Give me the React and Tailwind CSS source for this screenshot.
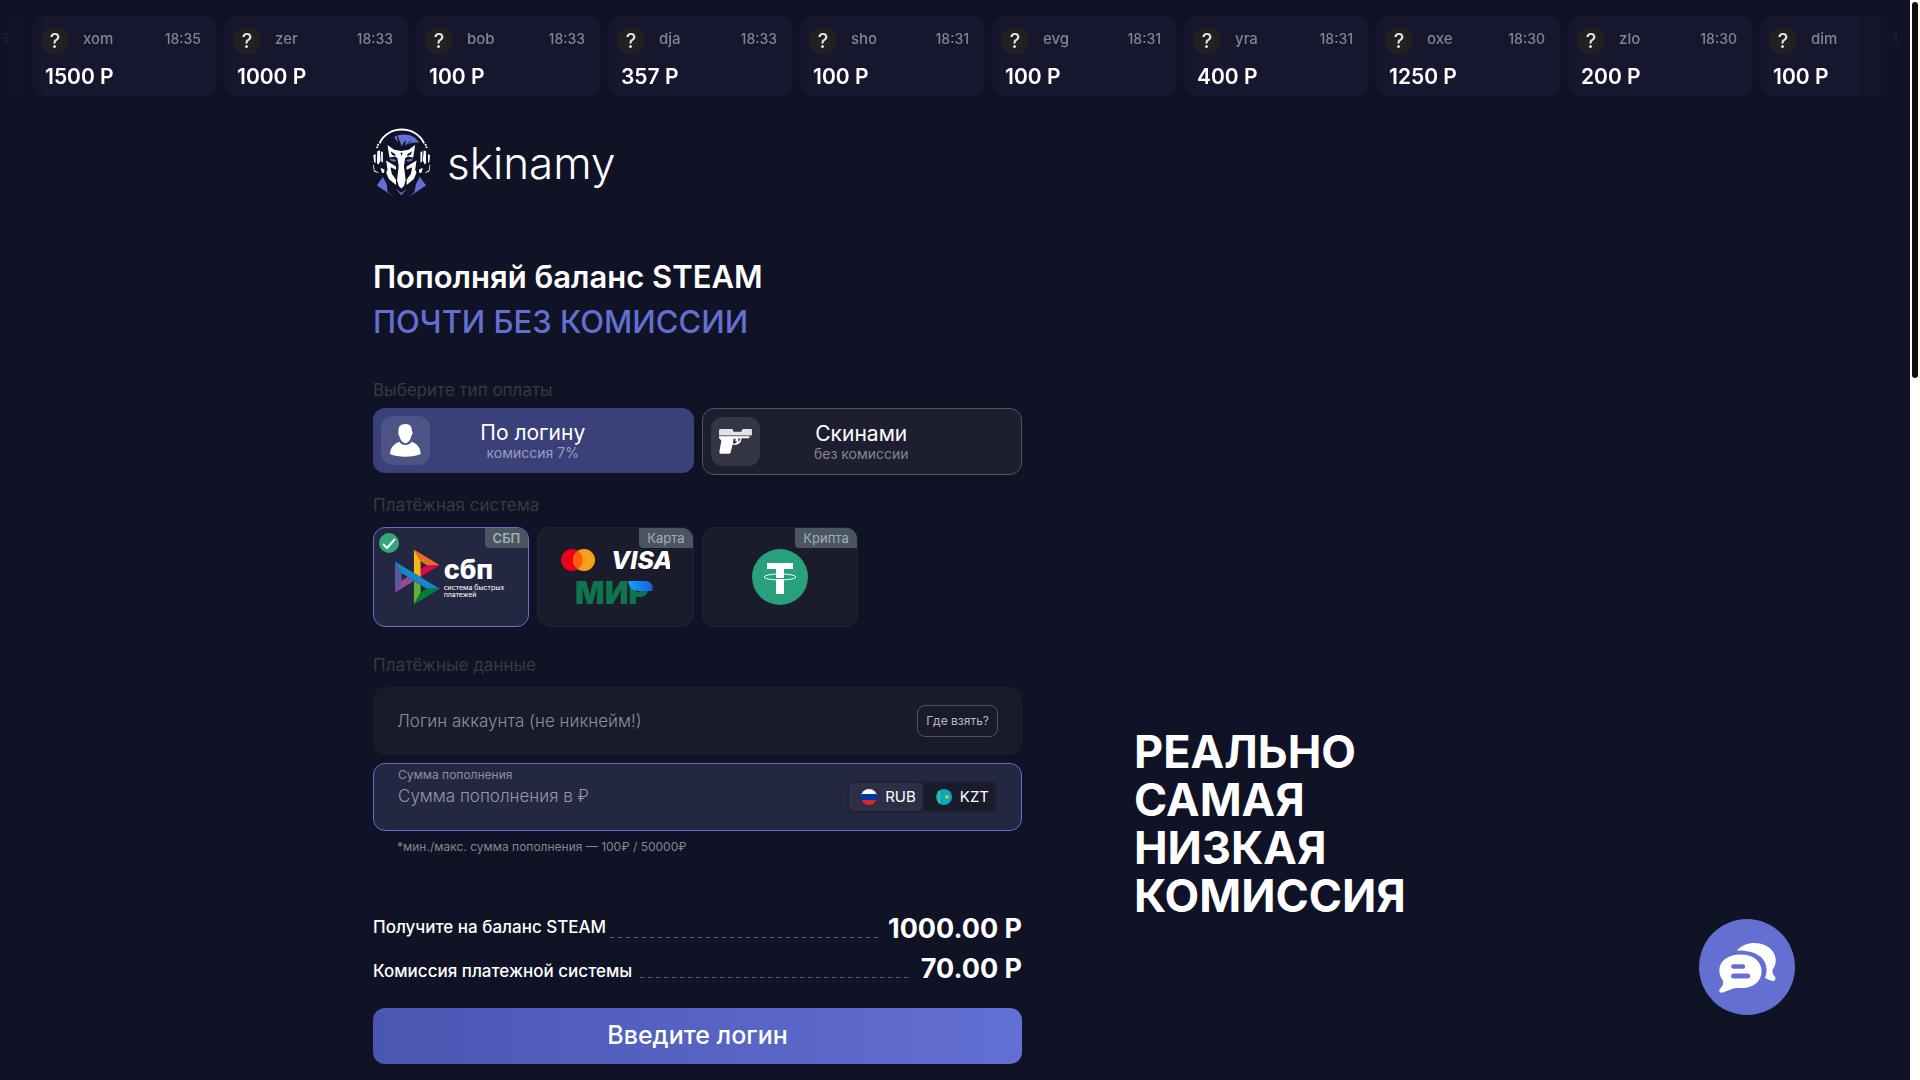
import React, { useState } from 'react';

const payments = [
  { name: 'ryk', time: '18:35', amount: '500 P' },
  { name: 'xom', time: '18:35', amount: '1500 P' },
  { name: 'zer', time: '18:33', amount: '1000 P' },
  { name: 'bob', time: '18:33', amount: '100 P' },
  { name: 'dja', time: '18:33', amount: '357 P' },
  { name: 'sho', time: '18:31', amount: '100 P' },
  { name: 'evg', time: '18:31', amount: '100 P' },
  { name: 'yra', time: '18:31', amount: '400 P' },
  { name: 'oxe', time: '18:30', amount: '1250 P' },
  { name: 'zlo', time: '18:30', amount: '200 P' },
  { name: 'dim', time: '18:30', amount: '100 P' },
];

const LogoIcon = () => (
  <svg viewBox="38 22 176 214" className="h-[71px] w-[58px]" aria-hidden="true">
    <path d="M58 68C82 12 168 12 193 68" fill="none" stroke="#fff" strokeWidth="6" />
    <path d="M54 70l-4 12M197 70l4 12" fill="none" stroke="#fff" strokeWidth="6" strokeDasharray="5 3" />
    <path d="M102 50l8-7 4 22zM112 44c28-8 54 0 66 22-12-2-24 0-36 6l14-12c-8 2-14 8-20 16l2-18c-6 6-10 12-12 20z" fill="#6370d1" />
    <g fill="#fff">
      <path d="M82 73l20 14 22 4 22-4 20-14-6 38-16-3-20 10-20-10-16 3z" />
      <path d="M112 111l12-5 12 5-4 26 5 42-5 18-8 8-8-8-5-18 5-42z" />
      <path d="M78 120l30 18v10l-17-8 4 20 13 18v16l-22-18-8-20 4-8zM170 120l-30 18v10l17-8-4 20-13 18v16l22-18 8-20-4-8z" />
      <path d="M39 104l7-4v28l-5-4zM51 92l8-3 2 31-6 12-5-4zM62 92l6 2v32l-5-2zM211 104l-6-4v28l4-4zM199 92l-7-3-3 31 6 12 4-4zM188 92l-6 2v32l5-2z" />
      <path d="M40 132l3 18 12 6-1 2-13-5-3-20zM210 132l-3 18-11 6 1 2 12-5 3-20z" />
      <path d="M61 142l12 6-2 10-6-1zM189 142l-12 6 2 10 6-1z" />
    </g>
    <path d="M91 92l14 8 2 6-11-3zM157 92l-14 8-2 6 11-3zM121 96h7l-3 10z" fill="#101225" />
    <path d="M88 114l22 4-6 6-12-3zM160 114l-22 4 6 6 12-3z" fill="#6370d1" />
    <path d="M68 169l12 24 2 22 18 14-50-33zM180 169l-12 24-4 22-16 14 51-33zM106 205l18 13 18-13-18 20z" fill="#6370d1" />
  </svg>
);

const UserIcon = () => (
  <svg viewBox="0 0 94 100" className="h-[33px] w-[31px]" fill="#fff" aria-hidden="true">
    <path d="M46 0c14 0 21 7 20 20l2 4c1 6-1 9-3 11-2 13-10 23-18 23S30 48 28 35c-3-3-4-7-2-11C24 7 32 1 46 0z" />
    <path d="M29 54c6 13 30 13 36 0 17 6 28 18 28 37-24 11-69 11-93 0 1-19 12-31 29-37z" />
  </svg>
);

const GunIcon = () => (
  <svg viewBox="0 0 100 76" className="h-[25px] w-[33px]" aria-hidden="true">
    <path d="M0 3l3-3h38l3 8h24l3-8h28l1 3v16H0z" fill="#e3e3e6" />
    <path d="M0 19h98v3H0z" fill="#8a8c98" />
    <path d="M0 22h92v6H68c0 12-7 20-20 20h-7l-6 24-4 3H6c-4 0-5-2-5-6l6-34-7-8z" fill="#fff" />
    <path d="M44 30h8l-4 4 7 5c-4 5-8 6-13 5zM58 29h6c0 4-2 8-5 10z" fill="#343648" />
  </svg>
);

const SbpLogo = () => (
  <div className="flex items-center gap-1">
    <svg viewBox="0 0 98 120" className="h-14 w-[45px]" aria-hidden="true">
      <path d="M0 26.12l14.532 25.975v15.844L.017 93.863 0 26.12z" fill="#5b57a2" />
      <path d="M55.797 42.643l13.617-8.346 27.868-.026-41.485 25.414V42.643z" fill="#d90751" />
      <path d="M55.72 25.967l.077 34.39-14.566-8.95V0l14.49 25.967z" fill="#fab718" />
      <path d="M97.282 34.271l-27.869.026-13.693-8.33L41.231 0l56.05 34.271z" fill="#ed6f26" />
      <path d="M55.797 94.007V77.322l-14.566-8.78.008 51.458 14.558-25.993z" fill="#63b22f" />
      <path d="M69.38 85.737L14.531 52.095 0 26.12l97.223 59.583-27.844.034z" fill="#1487c9" />
      <path d="M41.24 120l14.556-25.993 13.583-8.27 27.843-.034L41.24 120z" fill="#017f36" />
      <path d="M.017 93.863l41.333-25.32-13.896-8.526-12.922 7.922L.017 93.863z" fill="#984995" />
    </svg>
    <span className="flex w-16 flex-col text-left text-white">
      <span className="text-[27px] leading-7 font-extrabold">сбп</span>
      <span className="text-[7px] leading-[7px] whitespace-nowrap">
        система быстрых
        <br />
        платежей
      </span>
    </span>
  </div>
);

const CardLogos = () => (
  <svg viewBox="0 0 110 58" className="h-[58px] w-[110px]" aria-hidden="true">
    <defs>
      <linearGradient id="mir">
        <stop offset="0" stopColor="#0aa5ff" />
        <stop offset="1" stopColor="#1a5fd8" />
      </linearGradient>
    </defs>
    <circle cx="12" cy="12" r="11" fill="#eb001b" />
    <circle cx="24" cy="12" r="11" fill="#f79e1b" />
    <path d="M18 3a11 11 0 0 1 0 18a11 11 0 0 1 0-18z" fill="#ff5f00" />
    <text x="51" y="21" fontSize="25" fontWeight="800" fontStyle="italic" fill="#fff">VISA</text>
    <text x="15" y="56" fontSize="31" fontWeight="900" fill="#0f754e">МИР</text>
    <path d="M68 33h17c6 0 9 5 7 10H79c-6 0-10-3-11-10z" fill="url(#mir)" />
  </svg>
);

const TetherLogo = () => (
  <svg viewBox="0 0 56 56" className="size-14" aria-hidden="true">
    <circle cx="28" cy="28" r="28" fill="#26a17b" />
    <rect x="15" y="14" width="26" height="6" fill="#fff" />
    <rect x="24" y="14" width="8" height="31" fill="#fff" />
    <ellipse cx="28" cy="28" rx="16" ry="3" fill="none" stroke="#fff" strokeWidth="1" />
    <path d="M24 29.500h8" fill="none" stroke="#26a17b" strokeWidth="1" />
  </svg>
);

const ChatIcon = () => (
  <svg viewBox="116 124 170 152" className="h-[51px] w-[57px]" aria-hidden="true">
    <path d="M169 149c28-32 85-28 106 1 14 19 13 40 1 56-2 10 2 14 7 22 4 6 0 12-6 12-8-1-14-5-24-9 17-42-8-84-84-82z" fill="#fff" />
    <path d="M180 161c40 0 63 22 63 50 0 26-20 50-58 50-10 0-18 0-24 1l-36 13c-6 1-9-4-8-9l8-10c4-4 4-10 2-18-8-12-10-20-10-30 0-26 24-47 63-47z" fill="#fff" />
    <rect x="152" y="190" width="42" height="14" rx="7" fill="#6370d1" />
    <rect x="152" y="218" width="57" height="15" rx="7" fill="#6370d1" />
  </svg>
);

const CheckBadge = () => (
  <svg viewBox="0 0 20 20" className="absolute top-[5px] left-[5px] size-5" aria-hidden="true">
    <circle cx="10" cy="10" r="10" fill="#35a47a" />
    <path d="M4 11l4 4 8-9" fill="none" stroke="#fff" strokeWidth="2" />
  </svg>
);

const RubFlag = () => (
  <svg viewBox="0 0 16 16" className="size-4 rounded-full" aria-hidden="true">
    <rect width="16" height="6" fill="#fff" />
    <rect y="5" width="16" height="6" fill="#0039a6" />
    <rect y="11" width="16" height="5" fill="#d52b1e" />
  </svg>
);

const KztFlag = () => (
  <svg viewBox="0 0 16 16" className="size-4 rounded-full" aria-hidden="true">
    <rect width="16" height="16" fill="#00abc2" />
    <rect x="2" width="2" height="16" fill="#5cb87a" />
    <circle cx="11" cy="8" r="2" fill="#c9bd2f" />
  </svg>
);

const Ticker = () => (
  <div className="mr-2 overflow-hidden [mask-image:linear-gradient(to_right,transparent,black_44px,black_calc(100%-44px),transparent)]">
    <ul className="-ml-40 flex gap-2 pt-4 pl-px">
      {payments.map((payment, index) => (
        <li key={index} className="h-20 w-[184px] shrink-0 rounded-xl bg-[#16172e] px-2 pt-[11px]">
          <div className="flex h-7 items-center">
            <span className="flex size-7 items-center justify-center rounded-full bg-[#212121] text-xl font-medium text-[#e5e5e5]">?</span>
            <span className="ml-[14px] pb-1 text-[15px] leading-6 font-medium text-[#83848f]">{payment.name}</span>
            <span className="mr-2 ml-auto pb-1 text-sm leading-6 font-medium text-[#83848f]">{payment.time}</span>
          </div>
          <p className="mt-2 pl-1 text-[21px] leading-7 font-semibold text-white">{payment.amount}</p>
        </li>
      ))}
    </ul>
  </div>
);

const Dashes = () => (
  <span className="mt-7 h-px flex-1 bg-[repeating-linear-gradient(to_right,#5a5c69_0,#5a5c69_4px,transparent_4px,transparent_8px)]" />
);

const methods = [
  { id: 'sbp', title: 'СБП', Logo: SbpLogo },
  { id: 'card', title: 'Карта', Logo: CardLogos },
  { id: 'crypto', title: 'Крипта', Logo: TetherLogo },
];

const PaymentForm = () => {
  const [type, setType] = useState('login');
  const [method, setMethod] = useState('sbp');
  const [currency, setCurrency] = useState('RUB');

  const active = 'bg-[#3a4079]';
  const inactive = 'border border-[#4b5563] bg-[#1d1f30]';

  return (
    <form className="w-full max-w-[649px]" onSubmit={(e) => e.preventDefault()}>
      <h2 className="text-[17px] leading-6 text-[#383944]">Выберите тип оплаты</h2>
      <div className="mt-[6px] grid grid-cols-2 items-start gap-2">
        <button type="button" onClick={() => setType('login')} className={`flex items-center rounded-xl p-2 ${type === 'login' ? active : inactive}`}>
          <span className="flex size-[49px] items-center justify-center rounded-xl bg-white/10">
            <UserIcon />
          </span>
          <span className="flex flex-1 flex-col items-center pr-[50px]">
            <span className="text-[21px] leading-6 text-white">По логину</span>
            <span className="text-sm leading-4 text-[#9a9dbd]">комиссия 7%</span>
          </span>
        </button>
        <button type="button" onClick={() => setType('skins')} className={`flex items-center rounded-xl p-2 ${type === 'skins' ? active : inactive}`}>
          <span className="flex size-[49px] items-center justify-center rounded-xl bg-white/10">
            <GunIcon />
          </span>
          <span className="flex flex-1 flex-col items-center pr-[50px]">
            <span className="text-[21px] leading-6 text-white">Скинами</span>
            <span className="text-sm leading-4 text-[#85868f]">без комиссии</span>
          </span>
        </button>
      </div>

      <h2 className="mt-[18px] text-[17px] leading-6 text-[#383944]">Платёжная система</h2>
      <div className="mt-[10px] grid grid-cols-4 gap-2">
        {methods.map(({ id, title, Logo }) => (
          <button
            key={id}
            type="button"
            onClick={() => setMethod(id)}
            className={`relative flex h-[100px] items-center justify-center overflow-hidden rounded-xl border ${method === id ? 'border-[#6370d1] bg-[#242741]' : 'border-[#1f203a] bg-[#1a1b2b]'}`}
          >
            {method === id && <CheckBadge />}
            <span className={`absolute top-0 right-0 rounded-bl bg-[#4a5560] px-2 text-[13px] leading-5 text-[#a3adb8] ${method === id ? 'font-semibold' : ''}`}>{title}</span>
            <Logo />
          </button>
        ))}
      </div>

      <h2 className="mt-[26px] text-[17px] leading-6 text-[#383944]">Платёжные данные</h2>
      <div className="mt-[10px] flex h-[68px] items-center rounded-xl bg-[#191b2c] px-6">
        <label htmlFor="login" className="sr-only">Логин аккаунта</label>
        <input id="login" placeholder="Логин аккаунта (не никнейм!)" className="min-w-0 flex-1 text-[17px] leading-6 font-light text-white outline-none placeholder:text-[#8e8f98]" />
        <button type="button" className="h-8 rounded-lg border border-[#4b5563] px-2 text-xs text-[#b9bac0]">Где взять?</button>
      </div>

      <div className="mt-2 flex h-[68px] items-center rounded-xl border border-[#6370d1] bg-[#242741] px-6">
        <div className="flex min-w-0 flex-1 flex-col pb-5">
          <label htmlFor="amount" className="text-xs leading-4 text-[#8e8f9e]">Сумма пополнения</label>
          <input id="amount" placeholder="Сумма пополнения в ₽" className="mt-px h-6 text-[17px] leading-6 font-light text-white outline-none placeholder:text-[#9697a5]" />
        </div>
        <div className="flex gap-[2px] rounded-md bg-[#1f2138] p-[2px] text-[15px] text-white">
          <button type="button" onClick={() => setCurrency('RUB')} className={`flex h-7 items-center gap-2 rounded-sm pr-[6px] pl-3 ${currency === 'RUB' ? 'bg-[#2d2f46]' : 'bg-[#191a2a]'}`}>
            <RubFlag />
            RUB
          </button>
          <button type="button" onClick={() => setCurrency('KZT')} className={`flex h-7 items-center gap-2 rounded-sm pr-[6px] pl-3 ${currency === 'KZT' ? 'bg-[#2d2f46]' : 'bg-[#191a2a]'}`}>
            <KztFlag />
            KZT
          </button>
        </div>
      </div>
      <p className="mt-2 pl-6 text-xs leading-4 text-[#85868f]">*мин./макс. сумма пополнения — 100₽ / 50000₽</p>

      <dl className="mt-[54px] text-white">
        <div className="flex h-10 items-start gap-1">
          <dt className="pt-[6px] text-[17px] leading-6 font-medium">Получите на баланс STEAM</dt>
          <dd className="flex flex-1 items-start gap-[10px]">
            <Dashes />
            <span className="text-[27px] leading-10 font-bold">1000.00 P</span>
          </dd>
        </div>
        <div className="flex h-10 items-start gap-2">
          <dt className="pt-[10px] text-[17px] leading-6 font-medium">Комиссия платежной системы</dt>
          <dd className="flex flex-1 items-start gap-3">
            <Dashes />
            <span className="text-[27px] leading-10 font-bold">70.00 P</span>
          </dd>
        </div>
      </dl>

      <button type="submit" className="mt-[19px] h-14 w-full rounded-xl bg-linear-to-r from-[#4956b2] to-[#6370d3] pb-[2px] text-[25px] leading-8 font-medium text-white">
        Введите логин
      </button>
    </form>
  );
};

const App = () => {
  return (
    <div className="flex min-h-screen bg-[#101225] font-['Inter',sans-serif]">
      <div className="min-w-0 flex-1">
        <Ticker />
        <main className="mx-auto max-w-[1164px]">
          <a href="/" className="mt-8 flex w-fit items-center gap-4 text-white">
            <LogoIcon />
            <span className="text-[44px] leading-[71px] font-light">skinamy</span>
          </a>
          <h1 className="mt-[55px] text-[31px] leading-[45px] font-semibold text-white">
            Пополняй баланс STEAM
            <span className="block font-medium text-[#6370d1]">ПОЧТИ БЕЗ КОМИССИИ</span>
          </h1>
          <div className="mt-[34px] flex items-start justify-between">
            <PaymentForm />
            <p className="mt-[350px] w-[403px] text-[45px] leading-12 font-bold text-white">
              РЕАЛЬНО
              <br />
              САМАЯ
              <br />
              НИЗКАЯ
              <br />
              КОМИССИЯ
            </p>
          </div>
        </main>
      </div>

      <button type="button" aria-label="Чат" className="fixed right-[125px] bottom-[65px] flex size-24 items-center justify-center rounded-full bg-[#6370d1]">
        <ChatIcon />
      </button>

      <div className="w-[10px] shrink-0 bg-white p-[2px]">
        <div className="h-[376px] rounded-full bg-[#111]" />
      </div>
    </div>
  );
};

export default App;
